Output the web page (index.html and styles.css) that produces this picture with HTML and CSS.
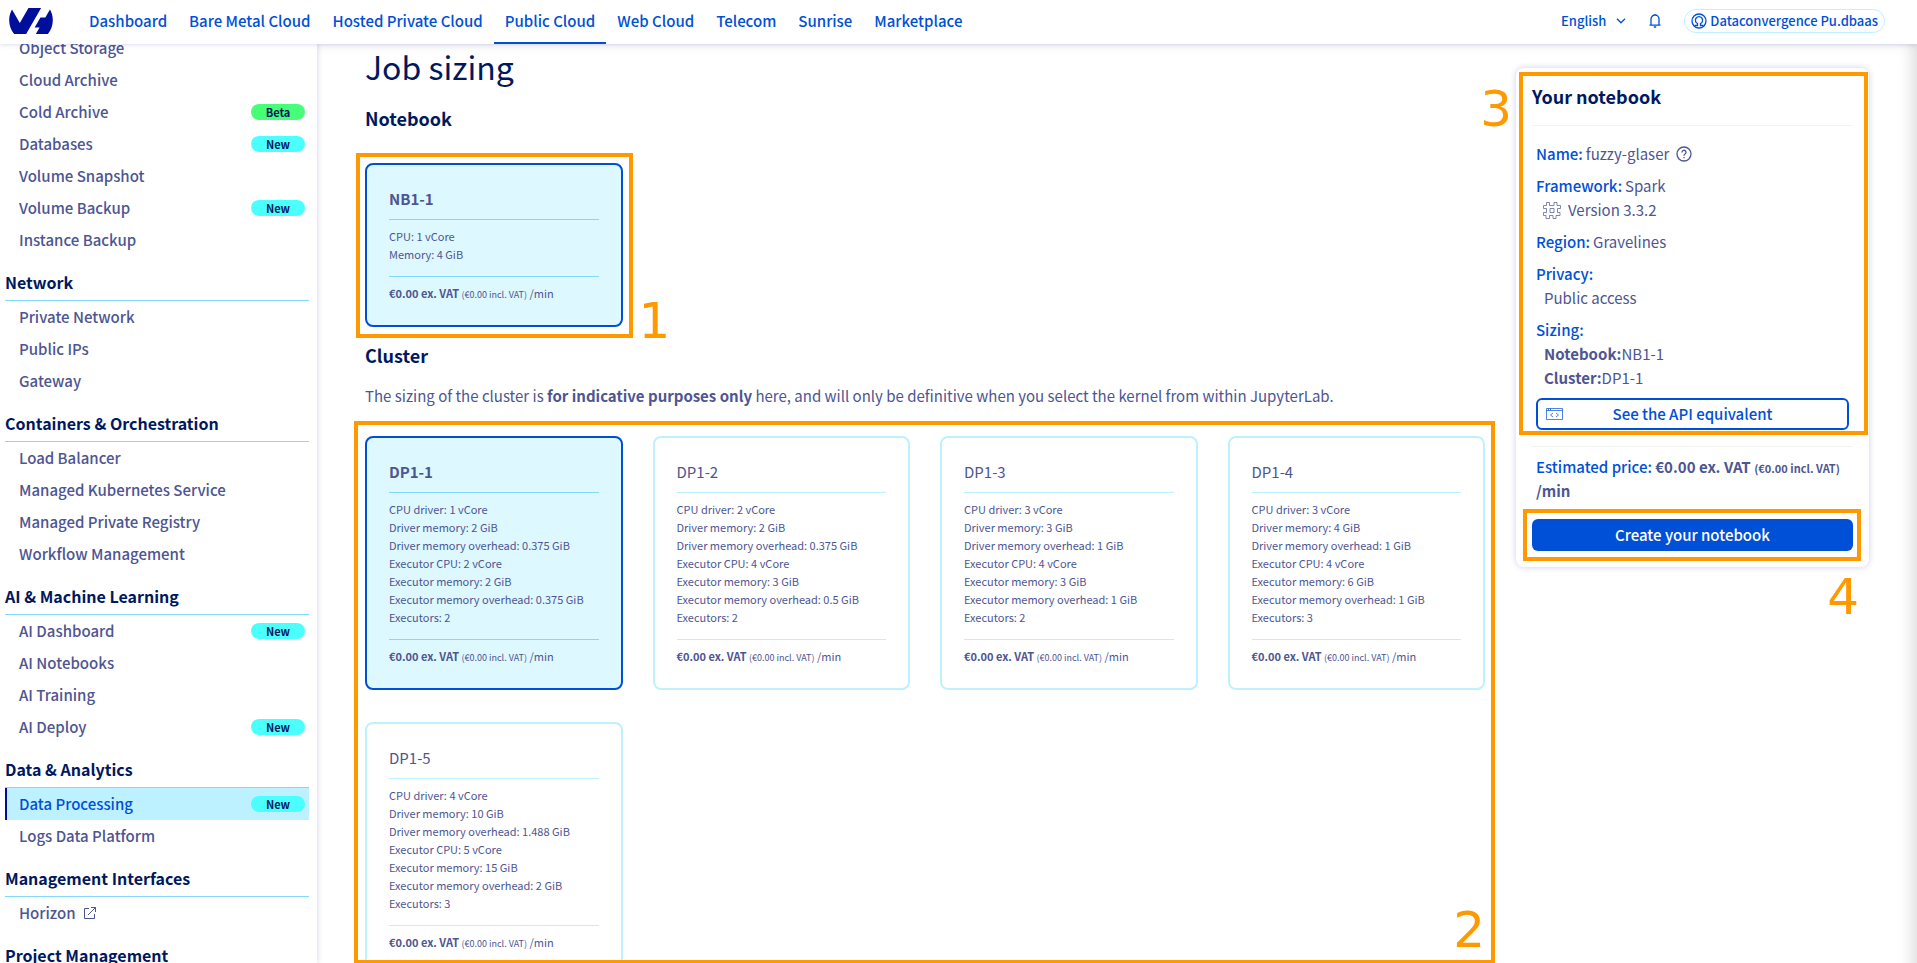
FILE: index.html
```html
<!DOCTYPE html>
<html lang="en">
<head>
<meta charset="utf-8">
<title>Job sizing - Public Cloud</title>
<link rel="stylesheet" href="styles.css">
</head>
<body>
<header class="topbar">
  <a class="logo" href="#" aria-label="Home">
    <svg width="44" height="26" viewBox="0 4.850 24 14.300" fill="#000e9c"><path d="M19.881 10.095l2.563-4.450C23.434 7.389 24 9.404 24 11.555c0 2.880-1.017 5.523-2.710 7.594h-6.620l2.040-3.541h-2.696l3.176-5.513h2.691zm-2.320-5.243L9.333 19.140l.003.009H2.709C1.014 17.077 0 14.435 0 11.555c0-2.152.570-4.170 1.561-5.918L5.855 13.080l4.751-8.228h6.955z"/></svg>
  </a>
  <nav class="mainnav" aria-label="Universes">
    <a href="#">Dashboard</a>
    <a href="#">Bare Metal Cloud</a>
    <a href="#">Hosted Private Cloud</a>
    <a href="#" class="current" aria-current="page">Public Cloud</a>
    <a href="#">Web Cloud</a>
    <a href="#">Telecom</a>
    <a href="#">Sunrise</a>
    <a href="#">Marketplace</a>
  </nav>
  <div class="tools">
    <button type="button" class="lang">English
      <svg width="10" height="6" viewBox="0 0 10 6" fill="none" stroke="currentColor" stroke-width="1.300"><path d="M1 .8 5 4.800 9 .8"/></svg>
    </button>
    <button type="button" class="bell" aria-label="Notifications">
      <svg width="12" height="14" viewBox="0 0 12 14" fill="none" stroke="currentColor" stroke-width="1.300"><path d="M.5 11.200H11.500M2 11V5a4 4 0 0 1 8 0v6M6 1V0M4.800 13h2.400"/></svg>
    </button>
    <button type="button" class="account">
      <svg width="16" height="16" viewBox="0 0 16 16" fill="none" stroke="currentColor" stroke-width="1.300"><circle cx="8" cy="8" r="7"/><path d="M3.500 12.500H6.500V10.500A3.600 3.600 0 1 1 9.500 10.500V12.500H12.500"/></svg>
      Dataconvergence Pu.dbaas
    </button>
  </div>
</header>
<div class="shell">
  <aside class="sidebar">
    <nav class="menu" aria-label="Public Cloud">
      <ul>
        <li><a href="#">Object Storage</a></li>
        <li><a href="#">Cloud Archive</a></li>
        <li><a href="#">Cold Archive<span class="badge beta">Beta</span></a></li>
        <li><a href="#">Databases<span class="badge">New</span></a></li>
        <li><a href="#">Volume Snapshot</a></li>
        <li><a href="#">Volume Backup<span class="badge">New</span></a></li>
        <li><a href="#">Instance Backup</a></li>
      </ul>
      <h2>Network</h2>
      <ul>
        <li><a href="#">Private Network</a></li>
        <li><a href="#">Public IPs</a></li>
        <li><a href="#">Gateway</a></li>
      </ul>
      <h2>Containers &amp; Orchestration</h2>
      <ul>
        <li><a href="#">Load Balancer</a></li>
        <li><a href="#">Managed Kubernetes Service</a></li>
        <li><a href="#">Managed Private Registry</a></li>
        <li><a href="#">Workflow Management</a></li>
      </ul>
      <h2>AI &amp; Machine Learning</h2>
      <ul>
        <li><a href="#">AI Dashboard<span class="badge">New</span></a></li>
        <li><a href="#">AI Notebooks</a></li>
        <li><a href="#">AI Training</a></li>
        <li><a href="#">AI Deploy<span class="badge">New</span></a></li>
      </ul>
      <h2>Data &amp; Analytics</h2>
      <ul>
        <li><a href="#" class="active" aria-current="page">Data Processing<span class="badge">New</span></a></li>
        <li><a href="#">Logs Data Platform</a></li>
      </ul>
      <h2>Management Interfaces</h2>
      <ul>
        <li><a href="#">Horizon
          <svg class="ext" width="12" height="12" viewBox="0 0 12 12" fill="none" stroke="currentColor"><path d="M5 1.500H.5V11.500H10.500V7M7 .5H11.500V5M11.500 .5 4 8"/></svg></a></li>
      </ul>
      <h2>Project Management</h2>
    </nav>
  </aside>
  <main class="content">
    <div class="steps">
      <h1>Job sizing</h1>
      <h3>Notebook</h3>
      <div class="cards">
        <div class="marked">
          <button type="button" class="card selected">
            <span class="name">NB1-1</span>
            <span class="specs">CPU: 1 vCore<br>Memory: 4 GiB</span>
            <span class="price"><b>€0.00 ex. VAT</b> <small>(€0.00 incl. VAT)</small> /min</span>
          </button>
          <span class="frame frame-notebook"></span>
          <span class="num num-1">1</span>
        </div>
      </div>
      <h3 class="cluster-title">Cluster</h3>
      <p class="hint">The sizing of the cluster is <b>for indicative purposes only</b> here, and will only be definitive when you select the kernel from within JupyterLab.</p>
      <div class="marked cluster">
        <div class="cards">
          <button type="button" class="card selected">
            <span class="name">DP1-1</span>
            <span class="specs">CPU driver: 1 vCore<br>Driver memory: 2 GiB<br>Driver memory overhead: 0.375 GiB<br>Executor CPU: 2 vCore<br>Executor memory: 2 GiB<br>Executor memory overhead: 0.375 GiB<br>Executors: 2</span>
            <span class="price"><b>€0.00 ex. VAT</b> <small>(€0.00 incl. VAT)</small> /min</span>
          </button>
          <button type="button" class="card">
            <span class="name">DP1-2</span>
            <span class="specs">CPU driver: 2 vCore<br>Driver memory: 2 GiB<br>Driver memory overhead: 0.375 GiB<br>Executor CPU: 4 vCore<br>Executor memory: 3 GiB<br>Executor memory overhead: 0.5 GiB<br>Executors: 2</span>
            <span class="price"><b>€0.00 ex. VAT</b> <small>(€0.00 incl. VAT)</small> /min</span>
          </button>
          <button type="button" class="card">
            <span class="name">DP1-3</span>
            <span class="specs">CPU driver: 3 vCore<br>Driver memory: 3 GiB<br>Driver memory overhead: 1 GiB<br>Executor CPU: 4 vCore<br>Executor memory: 3 GiB<br>Executor memory overhead: 1 GiB<br>Executors: 2</span>
            <span class="price"><b>€0.00 ex. VAT</b> <small>(€0.00 incl. VAT)</small> /min</span>
          </button>
          <button type="button" class="card">
            <span class="name">DP1-4</span>
            <span class="specs">CPU driver: 3 vCore<br>Driver memory: 4 GiB<br>Driver memory overhead: 1 GiB<br>Executor CPU: 4 vCore<br>Executor memory: 6 GiB<br>Executor memory overhead: 1 GiB<br>Executors: 3</span>
            <span class="price"><b>€0.00 ex. VAT</b> <small>(€0.00 incl. VAT)</small> /min</span>
          </button>
          <button type="button" class="card">
            <span class="name">DP1-5</span>
            <span class="specs">CPU driver: 4 vCore<br>Driver memory: 10 GiB<br>Driver memory overhead: 1.488 GiB<br>Executor CPU: 5 vCore<br>Executor memory: 15 GiB<br>Executor memory overhead: 2 GiB<br>Executors: 3</span>
            <span class="price"><b>€0.00 ex. VAT</b> <small>(€0.00 incl. VAT)</small> /min</span>
          </button>
        </div>
        <span class="frame frame-cluster"></span>
        <span class="num num-2">2</span>
      </div>
    </div>
    <aside class="summary">
      <h3>Your notebook</h3>
      <div class="details">
        <p><b>Name:</b> fuzzy-glaser
          <svg class="help" width="16" height="16" viewBox="0 0 16 16" fill="none" stroke="currentColor" stroke-width="1.300"><circle cx="8" cy="8" r="7"/><path d="M6 6.500A2 2 0 1 1 9 8Q8 8.500 8 9.800M8 11V12.300"/></svg></p>
        <p><b>Framework:</b> Spark</p>
        <p class="sub"><svg class="hash" width="18" height="17" viewBox="0 0 18 17" fill="none" stroke="currentColor" stroke-width=".7"><path d="M3.500 .5H6.500V3.500H11V.5H14V3.500H17.500V6.500H14.500V10.500H17V13.500H13V16.500H10V13.500H6.500V16.500H3V13.500H.5V10.500H3.500V6.500H.5V3.500H3.500ZM7 6.500H11V10.500H7Z"/></svg>Version 3.3.2</p>
        <p><b>Region:</b> Gravelines</p>
        <p><b>Privacy:</b></p>
        <p class="sub">Public access</p>
        <p><b>Sizing:</b></p>
        <p class="sub"><strong>Notebook:</strong>NB1-1</p>
        <p class="sub"><strong>Cluster:</strong>DP1-1</p>
        <button type="button" class="api">
          <svg width="17" height="12" viewBox="0 0 17 12" fill="none" stroke="currentColor" stroke-width=".7"><path d="M.5 .5H16.500V11.500H.5ZM.5 2.500H16.500M2.500 .5V2.500M4.500 .5V2.500M7 5 4.500 7 7 9M10 5 12.500 7 10 9"/></svg>
          <span>See the API equivalent</span>
        </button>
      </div>
      <div class="estimate"><span>Estimated price:</span> <b>€0.00 ex. VAT <small>(€0.00 incl. VAT)</small> /min</b></div>
      <div class="marked">
        <button type="button" class="create">Create your notebook</button>
        <span class="frame frame-create"></span>
        <span class="num num-4">4</span>
      </div>
      <span class="frame frame-summary"></span>
      <span class="num num-3">3</span>
    </aside>
  </main>
</div>
</body>
</html>
```
FILE: styles.css
```css
* { box-sizing: border-box; }
html, body { height: 100%; margin: 0; }
body {
  display: flex;
  flex-direction: column;
  overflow: hidden;
  background: #fff;
  color: #4d5592;
  font: 15px/24px "Noto Sans CJK SC", "Noto Sans", sans-serif;
}
h1, h2, h3, p, ul { margin: 0; padding: 0; }
ul { list-style: none; }
a { color: inherit; text-decoration: none; }
button { font: inherit; color: inherit; background: none; border: 0; padding: 0; cursor: pointer; }
svg { flex: none; }
small { line-height: 1; }

.topbar {
  position: relative;
  z-index: 2;
  flex: none;
  display: flex;
  align-items: stretch;
  height: 44px;
  background: #fff;
  box-shadow: 0 0 5px rgba(0, 14, 156, .2);
  color: #0050d7;
  font-weight: 500;
}
.logo { display: flex; align-items: center; padding: 0 25px 2px 9px; }
.mainnav { display: flex; }
.mainnav a { display: flex; align-items: center; padding: 0 11px 3px; white-space: nowrap; }
.mainnav .current { border-bottom: 2px solid #0050d7; padding-bottom: 1px; }
.tools { display: flex; align-items: center; margin-left: auto; padding: 0 32px 2px 0; font-size: 13px; }
.lang { display: flex; align-items: center; gap: 10px; }
.bell { display: flex; margin: 0 23px; }
.account {
  display: flex;
  align-items: center;
  gap: 3px;
  height: 24px;
  padding: 0 6px;
  border: 1px solid #bef1ff;
  border-radius: 12px;
}

.shell { flex: 1; min-height: 0; display: flex; overflow: hidden; }
.sidebar { flex: none; width: 317px; overflow: hidden; box-shadow: 0 0 6px rgba(0, 14, 156, .2); }
.menu { margin-top: -12px; padding: 0 8px 0 5px; font-weight: 500; }
.menu a { display: flex; align-items: center; height: 32px; padding: 0 4px 0 14px; }
.menu h2 {
  height: 45px;
  padding-top: 14px;
  border-bottom: 1px solid #85d9fd;
  color: #00185e;
  font-size: 16px;
  font-weight: 700;
}
.menu .active { background: #bef1ff; color: #0050d7; border-left: 2px solid #000e9c; padding-left: 12px; }
.ext { margin-left: 8px; }
.badge {
  width: 54px;
  margin-left: auto;
  border-radius: 8px;
  background: #4bffff;
  color: #00185e;
  font-size: 11px;
  font-weight: 700;
  line-height: 16px;
  text-align: center;
}
.beta { background: #47ff77; }

.content {
  flex: 1;
  min-width: 0;
  display: grid;
  grid-template-columns: minmax(0, 1fr) 353px;
  align-items: start;
  gap: 31px;
  padding: 0 48px;
  box-shadow: inset -16px 8px 16px -12px rgba(0, 0, 0, .15);
}
h1 { color: #00185e; font-size: 32px; font-weight: 400; line-height: 44px; }
h3 { color: #00185e; font-size: 18px; font-weight: 700; line-height: 24px; }
.steps > h3 { margin-top: 18px; }
.cards { display: grid; grid-template-columns: repeat(4, minmax(0, 1fr)); gap: 32px 30px; }
.steps > .cards { margin-top: 33px; }
.steps > .cluster-title { margin-top: 16px; }
.hint { margin-top: 17px; }
.cluster { margin-top: 28px; }
.marked { position: relative; }
.card {
  display: block;
  width: 100%;
  padding: 22px 22px 14px;
  border: 2px solid #bef1ff;
  border-radius: 8px;
  text-align: left;
  font-size: 11px;
  line-height: 18px;
}
.card span { display: block; }
.card .name { padding-bottom: 8px; border-bottom: 1px solid #bef1ff; font-size: 15px; line-height: 24px; }
.card .specs { padding: 7px 0 13px; border-bottom: 1px solid #bef1ff; }
.card .price { padding: 7px 0 9px; }
.card small { font-size: 9px; }
.card.selected { background: #def8ff; border-color: #0050d7; }
.card.selected .name { font-weight: 700; }
.card.selected .name, .card.selected .specs { border-bottom-color: #85d9fd; }

.summary {
  position: relative;
  margin-top: 24px;
  padding: 16px;
  border-radius: 8px;
  box-shadow: 0 0 6px rgba(0, 14, 156, .2);
}
.summary h3 { padding-bottom: 17px; border-bottom: 1px solid #f2f2f2; }
.details { padding: 8px 4px 16px; border-bottom: 1px solid #f2f2f2; }
.details p { display: flex; align-items: center; gap: 3px; margin-top: 8px; }
.details b { color: #0050d7; font-weight: 500; }
.details .sub { gap: 0; margin-top: 0; padding-left: 8px; }
.details .help { margin-left: 4px; }
.details .hash { margin: 0 7px 0 -1px; }
.api {
  display: flex;
  align-items: center;
  width: 100%;
  height: 32px;
  margin-top: 8px;
  padding: 0 8px;
  border: 2px solid #0050d7;
  border-radius: 6px;
  color: #0050d7;
  font-weight: 500;
}
.api span { flex: 1; padding-right: 17px; }
.estimate { padding: 8px 4px 16px; }
.estimate span { color: #0050d7; font-weight: 500; }
.estimate small { font-size: 11px; }
.create {
  display: block;
  width: 100%;
  height: 32px;
  border-radius: 6px;
  background: #0050d7;
  color: #fff;
  font-weight: 500;
}

.frame { position: absolute; border: 4px solid #ff9900; pointer-events: none; }
.frame-notebook { inset: -10px -10px -11px -9px; }
.frame-cluster { top: -15px; right: -10px; bottom: 12px; left: -11px; }
.frame-summary { top: 4px; right: 1px; left: 3px; height: 363px; }
.frame-create { inset: -10px -8px -10px -9px; }
.num { position: absolute; color: #ff9900; font: 50px/50px "DejaVu Sans", sans-serif; }
.num-1 { left: 100%; bottom: -19px; margin-left: 16px; }
.num-2 { right: 0; bottom: 21px; }
.num-3 { right: 100%; top: 16px; margin-right: 4px; }
.num-4 { right: -6px; top: 53px; }
```
